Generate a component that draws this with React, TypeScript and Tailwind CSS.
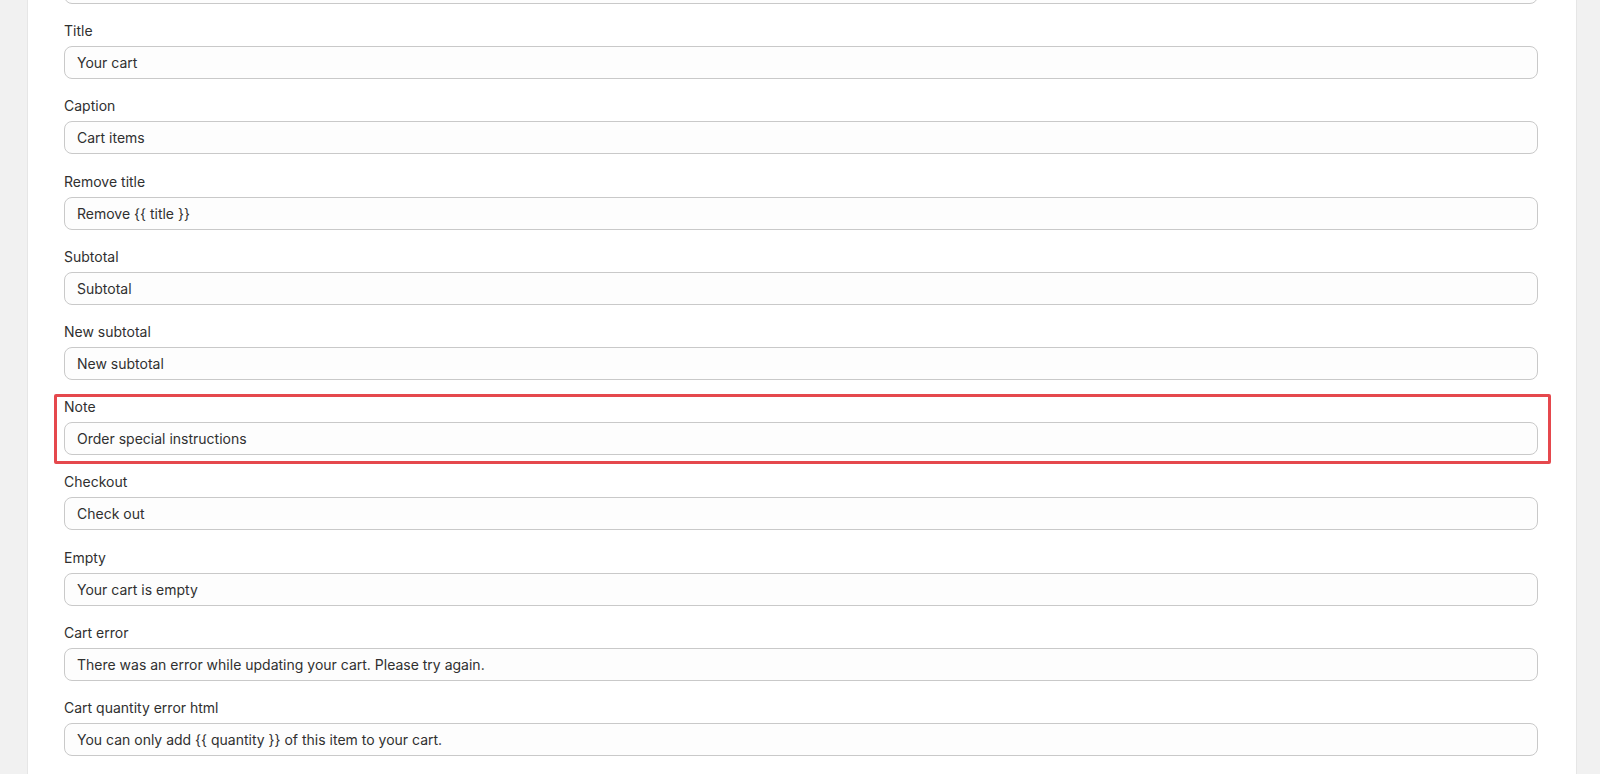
const FIELDS: { label: string; value: string; marked?: boolean }[] = [
  { label: "Title", value: "Your cart" },
  { label: "Caption", value: "Cart items" },
  { label: "Remove title", value: "Remove {{ title }}" },
  { label: "Subtotal", value: "Subtotal" },
  { label: "New subtotal", value: "New subtotal" },
  { label: "Note", value: "Order special instructions", marked: true },
  { label: "Checkout", value: "Check out" },
  { label: "Empty", value: "Your cart is empty" },
  { label: "Cart error", value: "There was an error while updating your cart. Please try again." },
  { label: "Cart quantity error html", value: "You can only add {{ quantity }} of this item to your cart." },
];

function TextInput({ value }: { value: string }) {
  return (
    <div className="flex h-[33px] items-center rounded-lg border border-[#c9c9c9] bg-[#fdfdfd] px-[12px] text-[14px] text-[#303030]">
      {value}
    </div>
  );
}

function Field({ label, value, marked }: { label: string; value: string; marked?: boolean }) {
  return (
    <div className="relative flex flex-col gap-[5px]">
      <label className="h-[20px] text-[14px] leading-[20px] text-[#303030]">{label}</label>
      <TextInput value={value} />
      {marked && (
        <div className="pointer-events-none absolute -top-[3px] -bottom-[9px] -left-[10px] -right-[13px] rounded-[2px] border-[3px] border-[#e5484d]" />
      )}
    </div>
  );
}

export default function App() {
  return (
    <div
      className="flex h-[774px] w-full overflow-hidden bg-[#f1f1f1]"
      style={{ fontFamily: "Inter, 'Noto Sans', Arial, sans-serif" }}
    >
      <div className="ml-[27px] flex h-full w-[1550px] flex-col gap-[17.2px] border-x border-[#e6e6e6] bg-white pl-[36px] pr-[38px]">
        {/* tail of the previous field, scrolled off the top */}
        <div className="-mt-[29px]">
          <TextInput value="" />
        </div>
        {FIELDS.map((f) => (
          <Field key={f.label} label={f.label} value={f.value} marked={f.marked} />
        ))}
      </div>
    </div>
  );
}
